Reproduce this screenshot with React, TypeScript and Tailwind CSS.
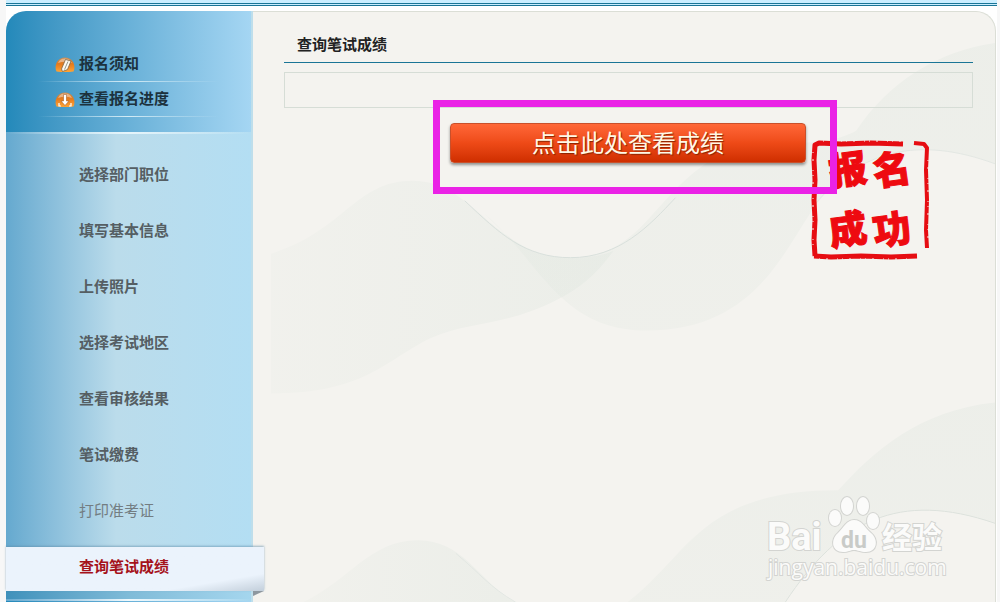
import { FC, ReactNode } from "react";
import clsx from "clsx";

interface IStep {
  label: string;
  state?: "active" | "muted";
}

const steps: IStep[] = [
  { label: "选择部门职位" },
  { label: "填写基本信息" },
  { label: "上传照片" },
  { label: "选择考试地区" },
  { label: "查看审核结果" },
  { label: "笔试缴费" },
  { label: "打印准考证", state: "muted" },
  { label: "查询笔试成绩", state: "active" },
];

const Orb: FC<{ id: string; children: ReactNode }> = ({ id, children }) => (
  <svg width="20" height="15" viewBox="0 0 20 15" className="shrink-0" aria-hidden="true">
    <defs>
      <linearGradient id={id} x1="0" y1="0" x2="0" y2="1">
        <stop offset="0" stopColor="#c98a50" />
        <stop offset="0.45" stopColor="#e57a1c" />
        <stop offset="1" stopColor="#ffa436" />
      </linearGradient>
    </defs>
    <path d="M1.500 14.500C-1 10 1.500 0.500 10 0.500S21 10 18.500 14.500Q10 15.500 1.500 14.500Z" fill={`url(#${id})`} />
    <path d="M3 6C5 2 8 1.500 10 1.500S15 2 17 6Q10 3.500 3 6Z" fill="#fff" opacity="0.4" />
    {children}
  </svg>
);

const NoticeIcon = () => (
  <Orb id="orb-notice">
    <path d="M10.500 2.500L16 4L12.500 12.500L7.500 14.500L6.500 12Z" fill="#fffaf0" stroke="#7d6440" strokeWidth="0.8" />
    <path d="M13 4.500L9.500 12.500" stroke="#8d9a90" strokeWidth="1" />
  </Orb>
);

const ProgressIcon = () => (
  <Orb id="orb-progress">
    <path d="M8.500 2.500H11.500V9H14L10 13.500L6 9H8.500Z" fill="#fff" stroke="#a8622a" strokeWidth="0.6" />
    <path d="M4 11V14H6M16 11V14H14" fill="none" stroke="#fff" strokeWidth="1.200" />
  </Orb>
);

const QuickLink: FC<{ icon: ReactNode; label: string }> = ({ icon, label }) => (
  <li>
    <a href="#" className="flex h-[34px] items-center gap-1 pl-[49px] text-[15px] leading-5 font-bold text-[#1c323e]">
      {icon}
      {label}
    </a>
    <div className="mx-8 h-px bg-linear-to-r from-transparent via-[#d4ecf6] to-transparent" />
  </li>
);

const StepItem: FC<{ step: IStep }> = ({ step: { label, state } }) =>
  state === "active" ? (
    <li className="relative -mr-[13px] pt-2">
      <a
        href="#"
        aria-current="page"
        className="flex h-11 items-center bg-linear-to-br from-[#ebf3fc] from-80% to-[#c3cfdb] pb-1 pl-[73px] text-[15px] leading-5 font-bold text-[#a5121b] shadow-[0_-1px_2px_#5d8ba599]"
      >
        {label}
      </a>
      {/* folded corner under the ribbon */}
      <svg width="11" height="5" viewBox="0 0 11 5" className="absolute top-full right-0" aria-hidden="true">
        <path d="M0 0H11L0 5Z" fill="#8d979f" />
      </svg>
    </li>
  ) : (
    <li>
      <a
        href="#"
        className={clsx(
          "flex h-14 items-center pl-[73px] text-[15px] leading-5",
          state === "muted" ? "font-normal text-[#737d82]" : "font-bold text-[#555e63]"
        )}
      >
        {label}
      </a>
    </li>
  );

const Sidebar = () => (
  <aside className="relative z-10 flex w-[247px] shrink-0 flex-col border-r-2 border-[#bedeeb]">
    <div className="h-[121px] rounded-tl-[20px] bg-linear-to-r from-[#2389ba] via-[#69b1d8] to-[#a5d6f3] pt-9">
      <ul>
        <QuickLink icon={<NoticeIcon />} label="报名须知" />
        <QuickLink icon={<ProgressIcon />} label="查看报名进度" />
      </ul>
    </div>
    <nav className="flex flex-1 flex-col bg-linear-to-r from-[#65a9cf] via-[#bbdceb] via-45% to-[#b3def3]">
      <div className="h-0.5 bg-linear-to-r from-transparent via-[#e6f5fb] to-transparent" />
      <ul className="pt-[13px]">
        {steps.map((step) => (
          <StepItem key={step.label} step={step} />
        ))}
      </ul>
      <div className="h-2 bg-linear-to-r from-[#3f91bb] via-[#7fbbd8] to-[#a5d6ee]" />
      <div className="h-0.5 bg-linear-to-r from-[#65a9cf] via-[#eff9fd] to-[#a5d6ee]" />
      <div className="flex-1 bg-linear-to-r from-[#2389ba] via-[#69b1d8] to-[#a5d6f3]" />
    </nav>
  </aside>
);

const Waves = () => (
  <svg
    viewBox="253 11 743 591"
    preserveAspectRatio="xMidYMin slice"
    className="absolute inset-0 h-full w-full"
    aria-hidden="true"
  >
    <defs>
      <linearGradient id="wave-left" x1="0" y1="0" x2="1" y2="0">
        <stop offset="0" stopColor="#dfe6df" stopOpacity="0.15" />
        <stop offset="1" stopColor="#dfe6df" stopOpacity="0.4" />
      </linearGradient>
      <linearGradient id="wave-right" x1="0" y1="0" x2="0" y2="1">
        <stop offset="0" stopColor="#dfe6df" stopOpacity="0.35" />
        <stop offset="1" stopColor="#dfe6df" stopOpacity="0.25" />
      </linearGradient>
    </defs>
    <path
      d="M271 253C345 230 355 180 413 180C475 180 495 257 571 257C590 257 602 255 614 250C598 273 580 288 556 300C505 326 470 320 430 338C385 360 365 393 271 393Z"
      fill="url(#wave-left)"
    />
    <path
      d="M485 213C515 243 528 257 571 257C650 257 655 180 735 148C800 140 830 145 857 130C890 80 940 50 996 42V163C920 135 860 150 820 200C785 245 760 330 647 330C560 330 540 260 485 213Z"
      fill="url(#wave-right)"
    />
    <path d="M465 200C500 233 525 257 571 257C620 257 650 225 676 197" fill="none" stroke="#d9e0dc" strokeWidth="1" />
    <path d="M812 208C860 148 920 135 996 163" fill="none" stroke="#e3e7e3" strokeWidth="1" />
    <path d="M303 602C350 580 370 540 418 540C465 540 480 583 516 602Z" fill="url(#wave-left)" />
    <path
      d="M628 602C690 555 700 490 839 490C875 450 920 410 996 402V523C900 490 840 520 786 602Z"
      fill="url(#wave-right)"
    />
    <path d="M786 602C840 520 900 490 996 523" fill="none" stroke="#dde2dd" strokeWidth="1" />
    <path d="M456 553C480 573 490 587 516 602" fill="none" stroke="#e3e7e3" strokeWidth="1" />
  </svg>
);

const Stamp = () => (
  <svg
    width="119"
    height="120"
    viewBox="0 0 119 120"
    className="mt-10 -ml-[26px] shrink-0"
    role="img"
    aria-label="报名成功"
  >
    <g fill="none" stroke="#e60d12" strokeWidth="5" strokeLinejoin="round">
      <path d="M4 116L3 100L4 80L3 60L4 40L3 20L4 5L8 3L30 4L60 3L92 4" />
      <path d="M103 3L113 4L116 8L115 30L116 60L115 90L116 108" strokeWidth="4" />
      <path d="M3 116L20 117L50 116L80 117L106 116" />
    </g>
    <g stroke="#f4f3ef" strokeWidth="1" strokeDasharray="1 6 2 9 1 4">
      <path d="M2 12V110M117 20V105M12 1H90M8 119H100" />
    </g>
    <g fill="#ee0a10" stroke="#ee0a10" strokeWidth="1" className="text-[38px] font-black">
      <text x="20" y="46" rotate="-8">报</text>
      <text x="64" y="46" rotate="-8">名</text>
      <text x="20" y="106" rotate="-8">成</text>
      <text x="64" y="106" rotate="-8">功</text>
    </g>
  </svg>
);

const Watermark = () => (
  <svg
    width="190"
    height="96"
    viewBox="0 0 190 96"
    className="pointer-events-none absolute right-[43px] bottom-3"
    role="img"
    aria-label="Baidu 经验 jingyan.baidu.com"
  >
    <g fill="#fbfbfa" stroke="#d3d4d1" strokeWidth="2" paintOrder="stroke">
      <text x="5" y="56" className="font-[Roboto,sans-serif] text-[38px] font-bold">Bai</text>
      <ellipse cx="73" cy="24" rx="6" ry="8" />
      <ellipse cx="85" cy="12" rx="6" ry="9" />
      <ellipse cx="101" cy="12" rx="6" ry="9" />
      <ellipse cx="111" cy="27" rx="6" ry="8" />
      <path d="M92 26C85 26 82 33 76 39C68 46 70 58 81 58C87 58 88 56 92 56S98 58 104 58C115 58 117 46 109 39C102 33 100 26 92 26Z" />
      <text x="120" y="54" className="text-[30px] font-bold">经验</text>
      <text x="6" y="81" className="font-[Open_Sans,sans-serif] text-[21px]">jingyan.baidu.com</text>
    </g>
    <text x="79" y="54" fill="#c9cbc8" className="font-[Roboto,sans-serif] text-[23px] font-bold">
      du
    </text>
  </svg>
);

const ResultPanel = () => (
  <main className="relative min-w-0 flex-1 rounded-tr-[20px] border-t border-r border-[#dbded6] bg-[#f4f3ef]">
    <div className="absolute inset-0 overflow-hidden rounded-tr-[20px]">
      <Waves />
    </div>
    <div className="relative pr-[22px] pl-[31px]">
      <h1 className="border-b border-[#1a7596] pt-[23px] pb-[7px] pl-[13px] text-[15px] leading-5 font-bold text-[#222]">
        查询笔试成绩
      </h1>
      <div className="mt-[9px] h-9 border border-[#d6ddd6]" />
      <div className="-mt-2 ml-[149px] flex items-start">
        <div className="relative z-10 shrink-0 border-[7px] border-[#ea22e6] pt-4 pr-6 pb-6 pl-[10px]">
          <button
            type="button"
            className="h-10 w-[356px] rounded-sm border border-[#c9502b] bg-linear-to-b from-[#ff6737] via-[#ee4a17] to-[#cf2e00] text-2xl leading-10 text-[#fff8e6] shadow-[0_2px_3px_#00000066] [text-shadow:1px_1px_1px_#8a2400]"
          >
            点击此处查看成绩
          </button>
        </div>
        <Stamp />
      </div>
    </div>
    <Watermark />
  </main>
);

export default function App() {
  return (
    <div className="flex min-h-screen flex-col overflow-hidden bg-[#f7f7f7] pr-[3px] pl-[6px] font-['Liberation_Sans','Noto_Sans_CJK_SC',sans-serif]">
      <header className="h-1.5 shrink-0 border-b border-[#1a7596] bg-[#cbeeff] pt-[3px]">
        <div className="h-px bg-[#1a7596]" />
      </header>
      <div className="flex flex-1 bg-white pt-[5px] pr-px">
        <Sidebar />
        <ResultPanel />
      </div>
    </div>
  );
}
